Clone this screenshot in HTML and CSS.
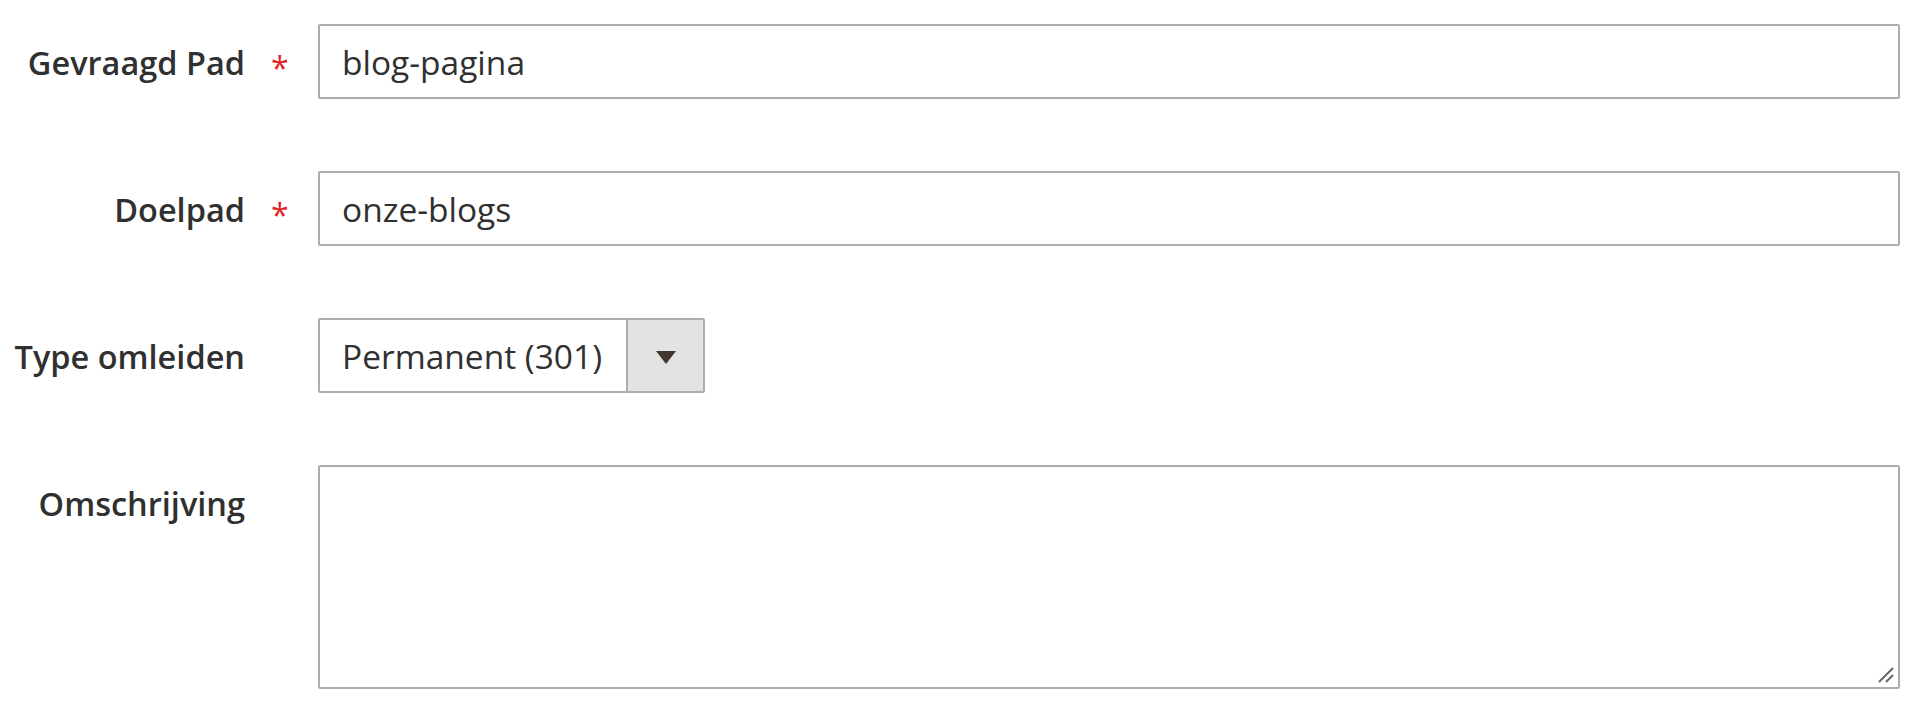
FILE: index.html
```html
<!DOCTYPE html>
<html>
<head>
  <title>URL Herschrijving</title>
  <link rel="stylesheet" href="styles.css">
</head>
<body>

  <form class="rewrite-form">
    <div class="field required">
      <label class="field-label" for="requestPath"><span>Gevraagd Pad</span></label>
      <div class="field-control">
        <input type="text" id="requestPath" class="input-text" value="blog-pagina">
      </div>
    </div>

    <div class="field required">
      <label class="field-label" for="targetPath"><span>Doelpad</span></label>
      <div class="field-control">
        <input type="text" id="targetPath" class="input-text" value="onze-blogs">
      </div>
    </div>

    <div class="field">
      <label class="field-label" for="redirectType"><span>Type omleiden</span></label>
      <div class="field-control">
        <div class="select-wrap">
          <select id="redirectType" class="select">
            <option value="0">Nee</option>
            <option value="302">Tijdelijk (302)</option>
            <option value="301" selected>Permanent (301)</option>
          </select>
          <span class="select-arrow"></span>
        </div>
      </div>
    </div>

    <div class="field">
      <label class="field-label" for="description"><span>Omschrijving</span></label>
      <div class="field-control">
        <div class="textarea-wrap">
          <textarea id="description" class="textarea"></textarea>
          <svg class="resize-grip" width="18" height="18" viewBox="0 0 18 18">
            <line x1="2" y1="16" x2="16" y2="2" stroke="#666" stroke-width="2"/>
            <line x1="9" y1="16" x2="16" y2="9" stroke="#666" stroke-width="2"/>
          </svg>
        </div>
      </div>
    </div>
  </form>

</body>
</html>
```

FILE: styles.css
```css
body {
  margin: 0;
  padding: 24px 20px 0 0;
  background-color: #fff;
  font-family: "Open Sans", "Liberation Sans", Arial, sans-serif;
  color: #303030;
}

.field {
  display: grid;
  grid-template-columns: 245px 1fr;
  column-gap: 73px;
  margin-bottom: 72px;
}

.field:last-child {
  margin-bottom: 0;
}

.field-label {
  text-align: right;
  font-size: 32.5px;
  font-weight: 600;
  line-height: 44px;
  padding-top: 17px;
  white-space: nowrap;
}

.field-label span {
  position: relative;
}

/* red star next to required labels */
.required .field-label span::after {
  content: "*";
  position: absolute;
  left: calc(100% + 26px);
  top: 6px;
  color: #e22626;
  font-size: 32px;
  font-weight: 400;
}

.input-text,
.select,
.textarea {
  box-sizing: border-box;
  width: 100%;
  margin: 0;
  border: 2px solid #adadad;
  border-radius: 2px;
  background-color: #fff;
  font-family: inherit;
  font-size: 33.5px;
  color: #303030;
  outline: none;
}

.input-text {
  height: 75px;
  padding: 0 22px;
}

.select-wrap {
  position: relative;
  width: 387px;
}

.select {
  height: 75px;
  padding: 0 90px 0 22px;
  appearance: none;
  -webkit-appearance: none;
}

.select-arrow {
  position: absolute;
  top: 2px;
  right: 2px;
  bottom: 2px;
  width: 75px;
  border-left: 2px solid #adadad;
  background-color: #e3e3e3;
  pointer-events: none;
}

.select-arrow::after {
  content: "";
  position: absolute;
  left: 28px;
  top: 31px;
  border-left: 10px solid transparent;
  border-right: 10px solid transparent;
  border-top: 13px solid #41362f;
}

.textarea-wrap {
  position: relative;
}

.textarea {
  display: block;
  height: 224px;
  padding: 12px 22px;
  resize: none;
}

.resize-grip {
  position: absolute;
  right: 5px;
  bottom: 5px;
}
```
